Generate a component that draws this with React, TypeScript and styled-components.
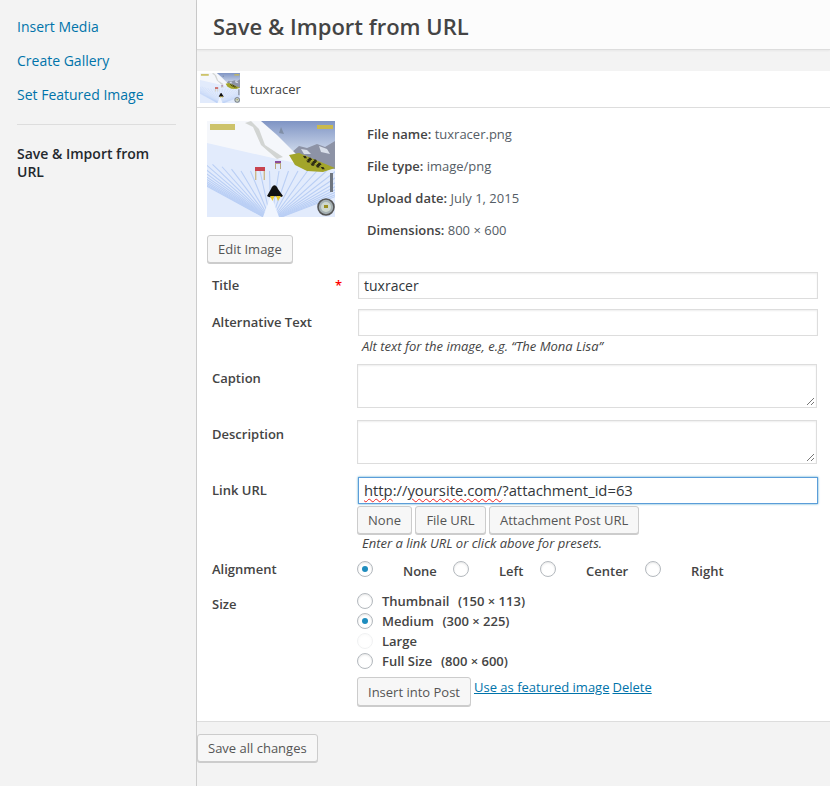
import React from 'react';
import styled, { createGlobalStyle } from 'styled-components';

const GlobalStyle = createGlobalStyle`
  html, body {
    margin: 0;
    padding: 0;
    height: 100%;
    overflow: hidden;
    background: #f3f3f3;
    font-family: "Open Sans", "Liberation Sans", sans-serif;
    color: #444;
  }
`;

const Shell = styled.div`
  display: flex;
  width: 830px;
  height: 786px;
  overflow: hidden;
`;

const Sidebar = styled.nav`
  width: 197px;
  flex-shrink: 0;
  box-sizing: border-box;
  padding: 17px 0 0 17px;
  border-right: 1px solid #ccc;
  display: flex;
  flex-direction: column;
`;

const MenuLink = styled.a`
  display: block;
  font-size: 14px;
  line-height: 20px;
  height: 34px;
  color: #0073aa;
`;

const MenuDivider = styled.div`
  width: 159px;
  height: 1px;
  background: #ddd;
  margin: 5px 0 20px;
`;

const MenuActive = styled.div`
  width: 150px;
  font-size: 14px;
  font-weight: 600;
  line-height: 18px;
  color: #23282d;
`;

const Main = styled.main`
  flex: 1;
  display: flex;
  flex-direction: column;
  min-width: 0;
`;

const Header = styled.header`
  height: 50px;
  box-sizing: border-box;
  background: #fcfcfc;
  border-bottom: 1px solid #ddd;
  box-shadow: 0 1px 2px rgba(0, 0, 0, 0.05);
  padding-left: 16px;
`;

const Title = styled.h1`
  margin: 0;
  font-size: 22px;
  font-weight: 600;
  line-height: 52px;
  color: #444;
`;

const Panel = styled.section`
  margin-top: 21px;
  height: 651px;
  box-sizing: border-box;
  background: #fff;
  border-bottom: 1px solid #ddd;
`;

const ItemBar = styled.div`
  height: 37px;
  box-sizing: border-box;
  border-bottom: 1px solid #ddd;
  display: flex;
  align-items: flex-start;
  padding: 2px 0 0 3px;
  gap: 10px;
  font-size: 13px;
  line-height: 32px;
  color: #444;
`;

const Thumb = styled.svg<{ $w: number; $h: number }>`
  display: block;
  width: ${(p) => p.$w}px;
  height: ${(p) => p.$h}px;
  flex-shrink: 0;
`;

const Details = styled.div`
  display: grid;
  grid-template-columns: 138px 1fr;
  padding: 13px 0 0 10px;
  height: 164px;
  box-sizing: border-box;
`;

const PreviewCol = styled.div`
  display: flex;
  flex-direction: column;
  align-items: flex-start;
  gap: 18px;
`;

const Meta = styled.div`
  padding: 4px 0 0 22px;
  display: flex;
  flex-direction: column;
  gap: 14px;
  font-size: 13px;
  line-height: 18px;
  color: #555d66;

  strong {
    font-weight: 600;
    color: #444;
  }
`;

const Button = styled.button<{ $tall?: boolean; $w?: number }>`
  height: ${(p) => (p.$tall ? 29 : 28)}px;
  ${(p) => (p.$w ? `width: ${p.$w}px;` : '')}
  box-sizing: border-box;
  padding: 0 10px ${(p) => (p.$tall ? 0 : 2)}px;
  margin: 0;
  font: 400 13px/26px "Open Sans", "Liberation Sans", sans-serif;
  color: #555;
  background: #f7f7f7;
  border: 1px solid #ccc;
  border-radius: 3px;
  box-shadow: 0 1px 0 #ccc;
  white-space: nowrap;
`;

const Form = styled.div`
  padding-left: 15px;
  display: flex;
  flex-direction: column;
`;

const Row = styled.div<{ $h: number }>`
  display: grid;
  grid-template-columns: 145px 1fr;
  height: ${(p) => p.$h}px;
`;

const Label = styled.div<{ $top?: number }>`
  font-size: 13px;
  font-weight: 600;
  line-height: 18px;
  color: #444;
  padding-top: ${(p) => p.$top ?? 4}px;
  position: relative;
`;

const Required = styled.span`
  position: absolute;
  right: 15px;
  top: 4px;
  color: #f00;
`;

const TextField = styled.div<{ $focus?: boolean }>`
  width: 460px;
  height: 27px;
  box-sizing: border-box;
  margin-left: 1px;
  padding: 0 5px;
  font-size: ${(p) => (p.$focus ? 14.8 : 14)}px;
  line-height: ${(p) => (p.$focus ? 25 : 26)}px;
  color: #32373c;
  background: #fff;
  border: 1px solid ${(p) => (p.$focus ? '#5b9dd9' : '#ddd')};
  box-shadow: ${(p) =>
    p.$focus ? '0 0 2px rgba(30, 140, 190, 0.8)' : 'inset 0 1px 2px rgba(0, 0, 0, 0.07)'};
`;

const TextArea = styled.div`
  width: 460px;
  height: 44px;
  box-sizing: border-box;
  background: #fff;
  border: 1px solid #ddd;
  box-shadow: inset 0 1px 2px rgba(0, 0, 0, 0.07);
  position: relative;
`;

const Grip = styled.svg`
  position: absolute;
  right: 1px;
  bottom: 1px;
  width: 9px;
  height: 9px;
`;

const Misspelled = styled.span`
  text-decoration: underline wavy #e22;
  text-decoration-thickness: 1px;
  text-underline-offset: 2px;
`;

const Help = styled.div<{ $top: number }>`
  font-size: 13px;
  font-style: italic;
  line-height: 16px;
  color: #444;
  margin: ${(p) => p.$top}px 0 0 5px;
`;

const ButtonRow = styled.div`
  display: flex;
  gap: 3px;
  margin-top: 2px;
`;

const Radio = styled.span<{ $checked?: boolean; $faded?: boolean }>`
  display: flex;
  align-items: center;
  justify-content: center;
  width: 16px;
  height: 16px;
  box-sizing: border-box;
  flex-shrink: 0;
  border: 1px solid #b4b9be;
  border-radius: 50%;
  background: #fff;
  box-shadow: inset 0 1px 2px rgba(0, 0, 0, 0.1);
  opacity: ${(p) => (p.$faded ? 0.2 : 1)};

  &::before {
    content: '';
    display: ${(p) => (p.$checked ? 'block' : 'none')};
    width: 6px;
    height: 6px;
    border-radius: 50%;
    background: #1e8cbe;
  }
`;

const AlignGroup = styled.div`
  display: grid;
  grid-template-columns: 46px 50px 46px 41px 46px 59px 46px 1fr;
  align-items: start;
  padding-top: 1px;
`;

const AlignText = styled.span`
  font-size: 13px;
  font-weight: 600;
  line-height: 18px;
  color: #444;
  padding-top: 1px;
`;

const SizeList = styled.div`
  display: flex;
  flex-direction: column;
`;

const SizeOption = styled.div`
  display: flex;
  align-items: center;
  gap: 9px;
  height: 20px;
  font-size: 13px;
  font-weight: 600;
  color: #444;

  em {
    font-style: normal;
    margin-left: 8.6px;
  }
`;

const InsertRow = styled.div`
  display: flex;
  align-items: flex-start;
  gap: 3px;
  margin-top: 6px;
`;

const TextLink = styled.a`
  font-size: 13px;
  line-height: 18px;
  margin-top: 1px;
  color: #0073aa;
  text-decoration: underline;
`;

const Footer = styled.div`
  padding-top: 12px;
`;

const sizes = [
  { name: 'Thumbnail', dim: '(150 × 113)' },
  { name: 'Medium', dim: '(300 × 225)', checked: true },
  { name: 'Large', faded: true },
  { name: 'Full Size', dim: '(800 × 600)' },
];

// ski tracks fan out from under the penguin
const tracks = Array.from({ length: 30 }, (_, i) => {
  const x = -80 + i * 9.5;
  const y = x < 30 ? 22 + (x + 80) * 0.25 : 50;
  return `M64 ${100}L${x} ${y}`;
});

// checker pattern on the ramp
const checks = Array.from({ length: 24 }, (_, i) => {
  const col = i % 6;
  const row = Math.floor(i / 6);
  if ((col + row) % 2) return '';
  const x = 96 + col * 2.6 + row * 1.6;
  const y = 35 + col * 0.9 + row * 2.2;
  return `M${x} ${y}h2.6l1.4 2.2h-2.6Z`;
}).join('');

// rough redraw of the tuxracer game screenshot
const TuxScene: React.FC<{ w: number; h: number }> = ({ w, h }) => (
  <Thumb $w={w} $h={h} viewBox="0 0 128 96" preserveAspectRatio="none">
    <defs>
      <filter id="soft" x="-5%" y="-5%" width="110%" height="110%">
        <feGaussianBlur stdDeviation="0.7" />
      </filter>
      <linearGradient id="sky" x1="0" y1="0" x2="0" y2="1">
        <stop offset="0" stopColor="#7f94c4" />
        <stop offset="1" stopColor="#d4deee" />
      </linearGradient>
    </defs>
    <rect width="128" height="96" fill="#e4edfc" />
    <rect x="50" width="78" height="34" fill="url(#sky)" />
    <path d="M84 32L92 25L100 27L110 23L118 26L128 20V48L100 44Z" fill="#8d93a6" filter="url(#soft)" />
    <path d="M94 28L100 29L104 33L97 33ZM112 25L120 28L123 33L114 31Z" fill="#d9dfea" filter="url(#soft)" />
    <path d="M0 0H54L70 14L90 34L84 46L60 40L0 26Z" fill="#f5f7fb" filter="url(#soft)" />
    <path d="M38 2L46 6L54 24L70 38L76 36L58 24L52 8L44 0Z" fill="#a9aca3" opacity="0.45" filter="url(#soft)" />
    <path d="M72 12L74 6L77 13Z" fill="#7f8ea6" />
    <path d="M0 22L70 38L128 50V96H0Z" fill="#e2ebfc" filter="url(#soft)" />
    <g stroke="#a9c3f2" strokeWidth="1.1" opacity="0.7" fill="none" filter="url(#soft)">
      {tracks.map((d) => (
        <path key={d} d={d} />
      ))}
    </g>
    <path d="M56 96L64 74L72 96Z" fill="#f0f5fe" filter="url(#soft)" />
    <path d="M82 34L92 32L128 47L116 51L100 50L88 44Z" fill="#a3a52c" filter="url(#soft)" />
    <path d={checks} fill="#2c2a14" />
    <path d="M48 46H58V59H56.6V50H49.4V59H48Z" fill="#cdb98a" />
    <rect x="48" y="46" width="10" height="4" fill="#c8434e" />
    <path d="M68 41H74V48H73V43H69V48H68Z" fill="#b9a77e" />
    <rect x="68" y="40" width="6" height="2" fill="#8a4a9c" />
    <path d="M64 68C66 63 69 63 71 68L76 75C73 77 71 76 68 75C66 76 63 77 60 75Z" fill="#111" />
    <path d="M63 75H67.5L65.5 80ZM69 75H74L71 80Z" fill="#e8c92f" />
    <rect x="123" y="52" width="3" height="19" fill="#6f7680" />
    <circle cx="119" cy="86" r="8" fill="#a5b0b3" stroke="#555" strokeWidth="1.6" />
    <circle cx="119" cy="86" r="5" fill="#ced7cf" />
    <rect x="117" y="84" width="4" height="3" fill="#9b8f22" />
    <rect x="3" y="3" width="25" height="6" fill="#cdc36b" />
    <rect x="110" y="4" width="16" height="4" fill="#c9b94e" />
  </Thumb>
);

const ResizeGrip = () => (
  <Grip viewBox="0 0 9 9">
    <path d="M1 8L8 1M5 8L8 5" stroke="#777" strokeWidth="1" fill="none" />
  </Grip>
);

export default function App() {
  return (
    <Shell>
      <GlobalStyle />
      <Sidebar>
        <MenuLink>Insert Media</MenuLink>
        <MenuLink>Create Gallery</MenuLink>
        <MenuLink>Set Featured Image</MenuLink>
        <MenuDivider />
        <MenuActive>Save &amp; Import from URL</MenuActive>
      </Sidebar>
      <Main>
        <Header>
          <Title>Save &amp; Import from URL</Title>
        </Header>
        <Panel>
          <ItemBar>
            <TuxScene w={40} h={30} />
            tuxracer
          </ItemBar>
          <Details>
            <PreviewCol>
              <TuxScene w={128} h={96} />
              <Button>Edit Image</Button>
            </PreviewCol>
            <Meta>
              <div><strong>File name:</strong> tuxracer.png</div>
              <div><strong>File type:</strong> image/png</div>
              <div><strong>Upload date:</strong> July 1, 2015</div>
              <div><strong>Dimensions:</strong> 800 × 600</div>
            </Meta>
          </Details>
          <Form>
            <Row $h={37}>
              <Label>
                Title
                <Required>*</Required>
              </Label>
              <TextField>tuxracer</TextField>
            </Row>
            <Row $h={55}>
              <Label>Alternative Text</Label>
              <div>
                <TextField />
                <Help $top={2}>Alt text for the image, e.g. “The Mona Lisa”</Help>
              </div>
            </Row>
            <Row $h={56}>
              <Label $top={5}>Caption</Label>
              <TextArea><ResizeGrip /></TextArea>
            </Row>
            <Row $h={57}>
              <Label $top={5}>Description</Label>
              <TextArea><ResizeGrip /></TextArea>
            </Row>
            <Row $h={83}>
              <Label>Link URL</Label>
              <div>
                <TextField $focus>
                  <Misspelled>http</Misspelled>://<Misspelled>yoursite.com/</Misspelled>?attachment_id=63
                </TextField>
                <ButtonRow>
                  <Button $w={55}>None</Button>
                  <Button $w={71}>File URL</Button>
                  <Button $w={150}>Attachment Post URL</Button>
                </ButtonRow>
                <Help $top={1}>Enter a link URL or click above for presets.</Help>
              </div>
            </Row>
            <Row $h={31}>
              <Label $top={0}>Alignment</Label>
              <AlignGroup>
                <Radio $checked />
                <AlignText>None</AlignText>
                <Radio />
                <AlignText>Left</AlignText>
                <Radio />
                <AlignText>Center</AlignText>
                <Radio />
                <AlignText>Right</AlignText>
              </AlignGroup>
            </Row>
            <Row $h={116}>
              <Label $top={4}>Size</Label>
              <div>
                <SizeList>
                  {sizes.map((s) => (
                    <SizeOption key={s.name}>
                      <Radio $checked={s.checked} $faded={s.faded} />
                      <span>
                        {s.name}
                        {s.dim && <em>{s.dim}</em>}
                      </span>
                    </SizeOption>
                  ))}
                </SizeList>
                <InsertRow>
                  <Button $tall>Insert into Post</Button>
                  <TextLink>Use as featured image</TextLink>
                  <TextLink>Delete</TextLink>
                </InsertRow>
              </div>
            </Row>
          </Form>
        </Panel>
        <Footer>
          <Button>Save all changes</Button>
        </Footer>
      </Main>
    </Shell>
  );
}
